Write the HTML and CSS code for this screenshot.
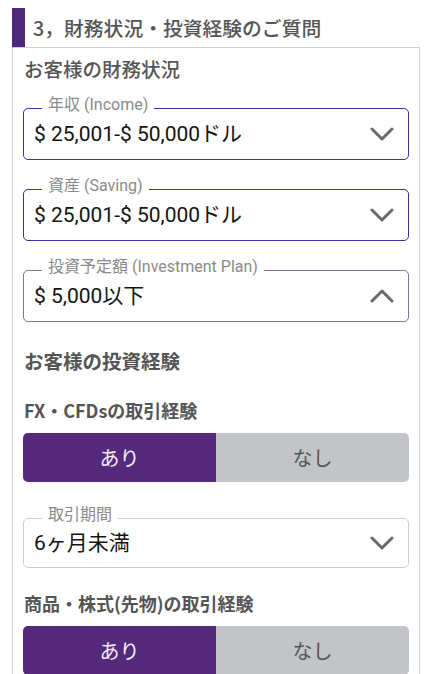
FILE: index.html
```html
<!DOCTYPE html>
<html lang="ja">
<head>
<meta charset="utf-8">
<title>財務状況・投資経験のご質問</title>
<link rel="stylesheet" href="styles.css">
</head>
<body>
<div class="page">
  <div class="section-title">
    <span class="section-bar"></span>
    <h1 class="section-text">3，財務状況・投資経験のご質問</h1>
  </div>
  <div class="card">
    <h2 class="group-title">お客様の財務状況</h2>

    <div class="select select-first select-focus">
      <span class="select-label">年収 (Income)</span>
      <span class="select-value">$ 25,001-$ 50,000ドル</span>
      <svg class="chevron" viewBox="0 0 24 14" width="24" height="14"><polyline points="2,2 12,12 22,2"/></svg>
    </div>

    <div class="select select-focus">
      <span class="select-label">資産 (Saving)</span>
      <span class="select-value">$ 25,001-$ 50,000ドル</span>
      <svg class="chevron" viewBox="0 0 24 14" width="24" height="14"><polyline points="2,2 12,12 22,2"/></svg>
    </div>

    <div class="select select-open">
      <span class="select-label">投資予定額 (Investment Plan)</span>
      <span class="select-value">$ 5,000以下</span>
      <svg class="chevron" viewBox="0 0 24 14" width="24" height="14"><polyline points="2,12 12,2 22,12"/></svg>
    </div>

    <h2 class="group-title group-second">お客様の投資経験</h2>

    <h3 class="question">FX・CFDsの取引経験</h3>
    <div class="toggle">
      <span class="toggle-opt toggle-on">あり</span>
      <span class="toggle-opt toggle-off">なし</span>
    </div>

    <div class="select select-period">
      <span class="select-label">取引期間</span>
      <span class="select-value">6ヶ月未満</span>
      <svg class="chevron" viewBox="0 0 24 14" width="24" height="14"><polyline points="2,2 12,12 22,2"/></svg>
    </div>

    <h3 class="question">商品・株式(先物)の取引経験</h3>
    <div class="toggle">
      <span class="toggle-opt toggle-on">あり</span>
      <span class="toggle-opt toggle-off">なし</span>
    </div>
  </div>
</div>
</body>
</html>
```

FILE: styles.css
```css
html, body {
  margin: 0;
  padding: 0;
  background: #ffffff;
}

body {
  font-family: Roboto, "Noto Sans CJK JP", sans-serif;
  color: #1a1a1a;
}

.page {
  padding: 8px 12px 0 12px;
}

.section-title {
  display: flex;
  align-items: center;
  height: 39px;
}

.section-bar {
  width: 13px;
  height: 39px;
  background: #4e2878;
  flex: none;
}

.section-text {
  margin: 0 0 0 8px;
  font-family: "Noto Sans CJK JP", sans-serif;
  font-size: 19.8px;
  font-weight: 500;
  line-height: 28px;
  color: #555555;
}

.card {
  border: 1px solid #cfcfcf;
  padding: 0 10px 20px 10px;
}

.group-title {
  margin: 7px 0 0 1px;
  font-family: "Noto Sans CJK JP", sans-serif;
  font-size: 19.5px;
  font-weight: 500;
  line-height: 28px;
  color: #555555;
}

.group-second {
  margin-top: 25px;
  font-weight: 700;
}

.question {
  margin: 22px 0 0 1px;
  font-family: "Noto Sans CJK JP", sans-serif;
  font-size: 18px;
  font-weight: 700;
  line-height: 26px;
  color: #555555;
}

.select {
  position: relative;
  display: flex;
  align-items: center;
  justify-content: space-between;
  height: 50px;
  border: 1px solid #cccccc;
  border-radius: 5px;
  padding: 0 14px 0 10px;
  margin-top: 29px;
}

.select-first {
  margin-top: 25px;
}

.select-focus {
  border-color: #3b32a2;
}

.select-open {
  border-color: #7d7592;
}

.select-period {
  margin-top: 36px;
  height: 48px;
}

.select-label {
  position: absolute;
  top: -13px;
  left: 18px;
  padding: 0 6px;
  background: #ffffff;
  font-family: Roboto, "Noto Sans CJK JP", sans-serif;
  font-size: 16px;
  line-height: 18px;
  color: #8a8a8a;
}

.select-value {
  font-family: Roboto, "Noto Sans CJK JP", sans-serif;
  font-size: 21px;
  line-height: 26px;
  color: #141414;
}

.chevron {
  flex: none;
}

.chevron polyline {
  fill: none;
  stroke: #6a6a6a;
  stroke-width: 3;
  stroke-linecap: round;
  stroke-linejoin: round;
}

.toggle {
  display: flex;
  height: 49px;
  margin-top: 10px;
  border-radius: 5px;
  overflow: hidden;
}

.toggle-opt {
  flex: 1 1 0;
  display: flex;
  align-items: center;
  justify-content: center;
  font-family: "Noto Sans CJK JP", sans-serif;
  font-size: 20px;
}

.toggle-on {
  background: #55297c;
  color: #f4eef8;
}

.toggle-off {
  background: #c3c4c8;
  color: #555555;
}
```
